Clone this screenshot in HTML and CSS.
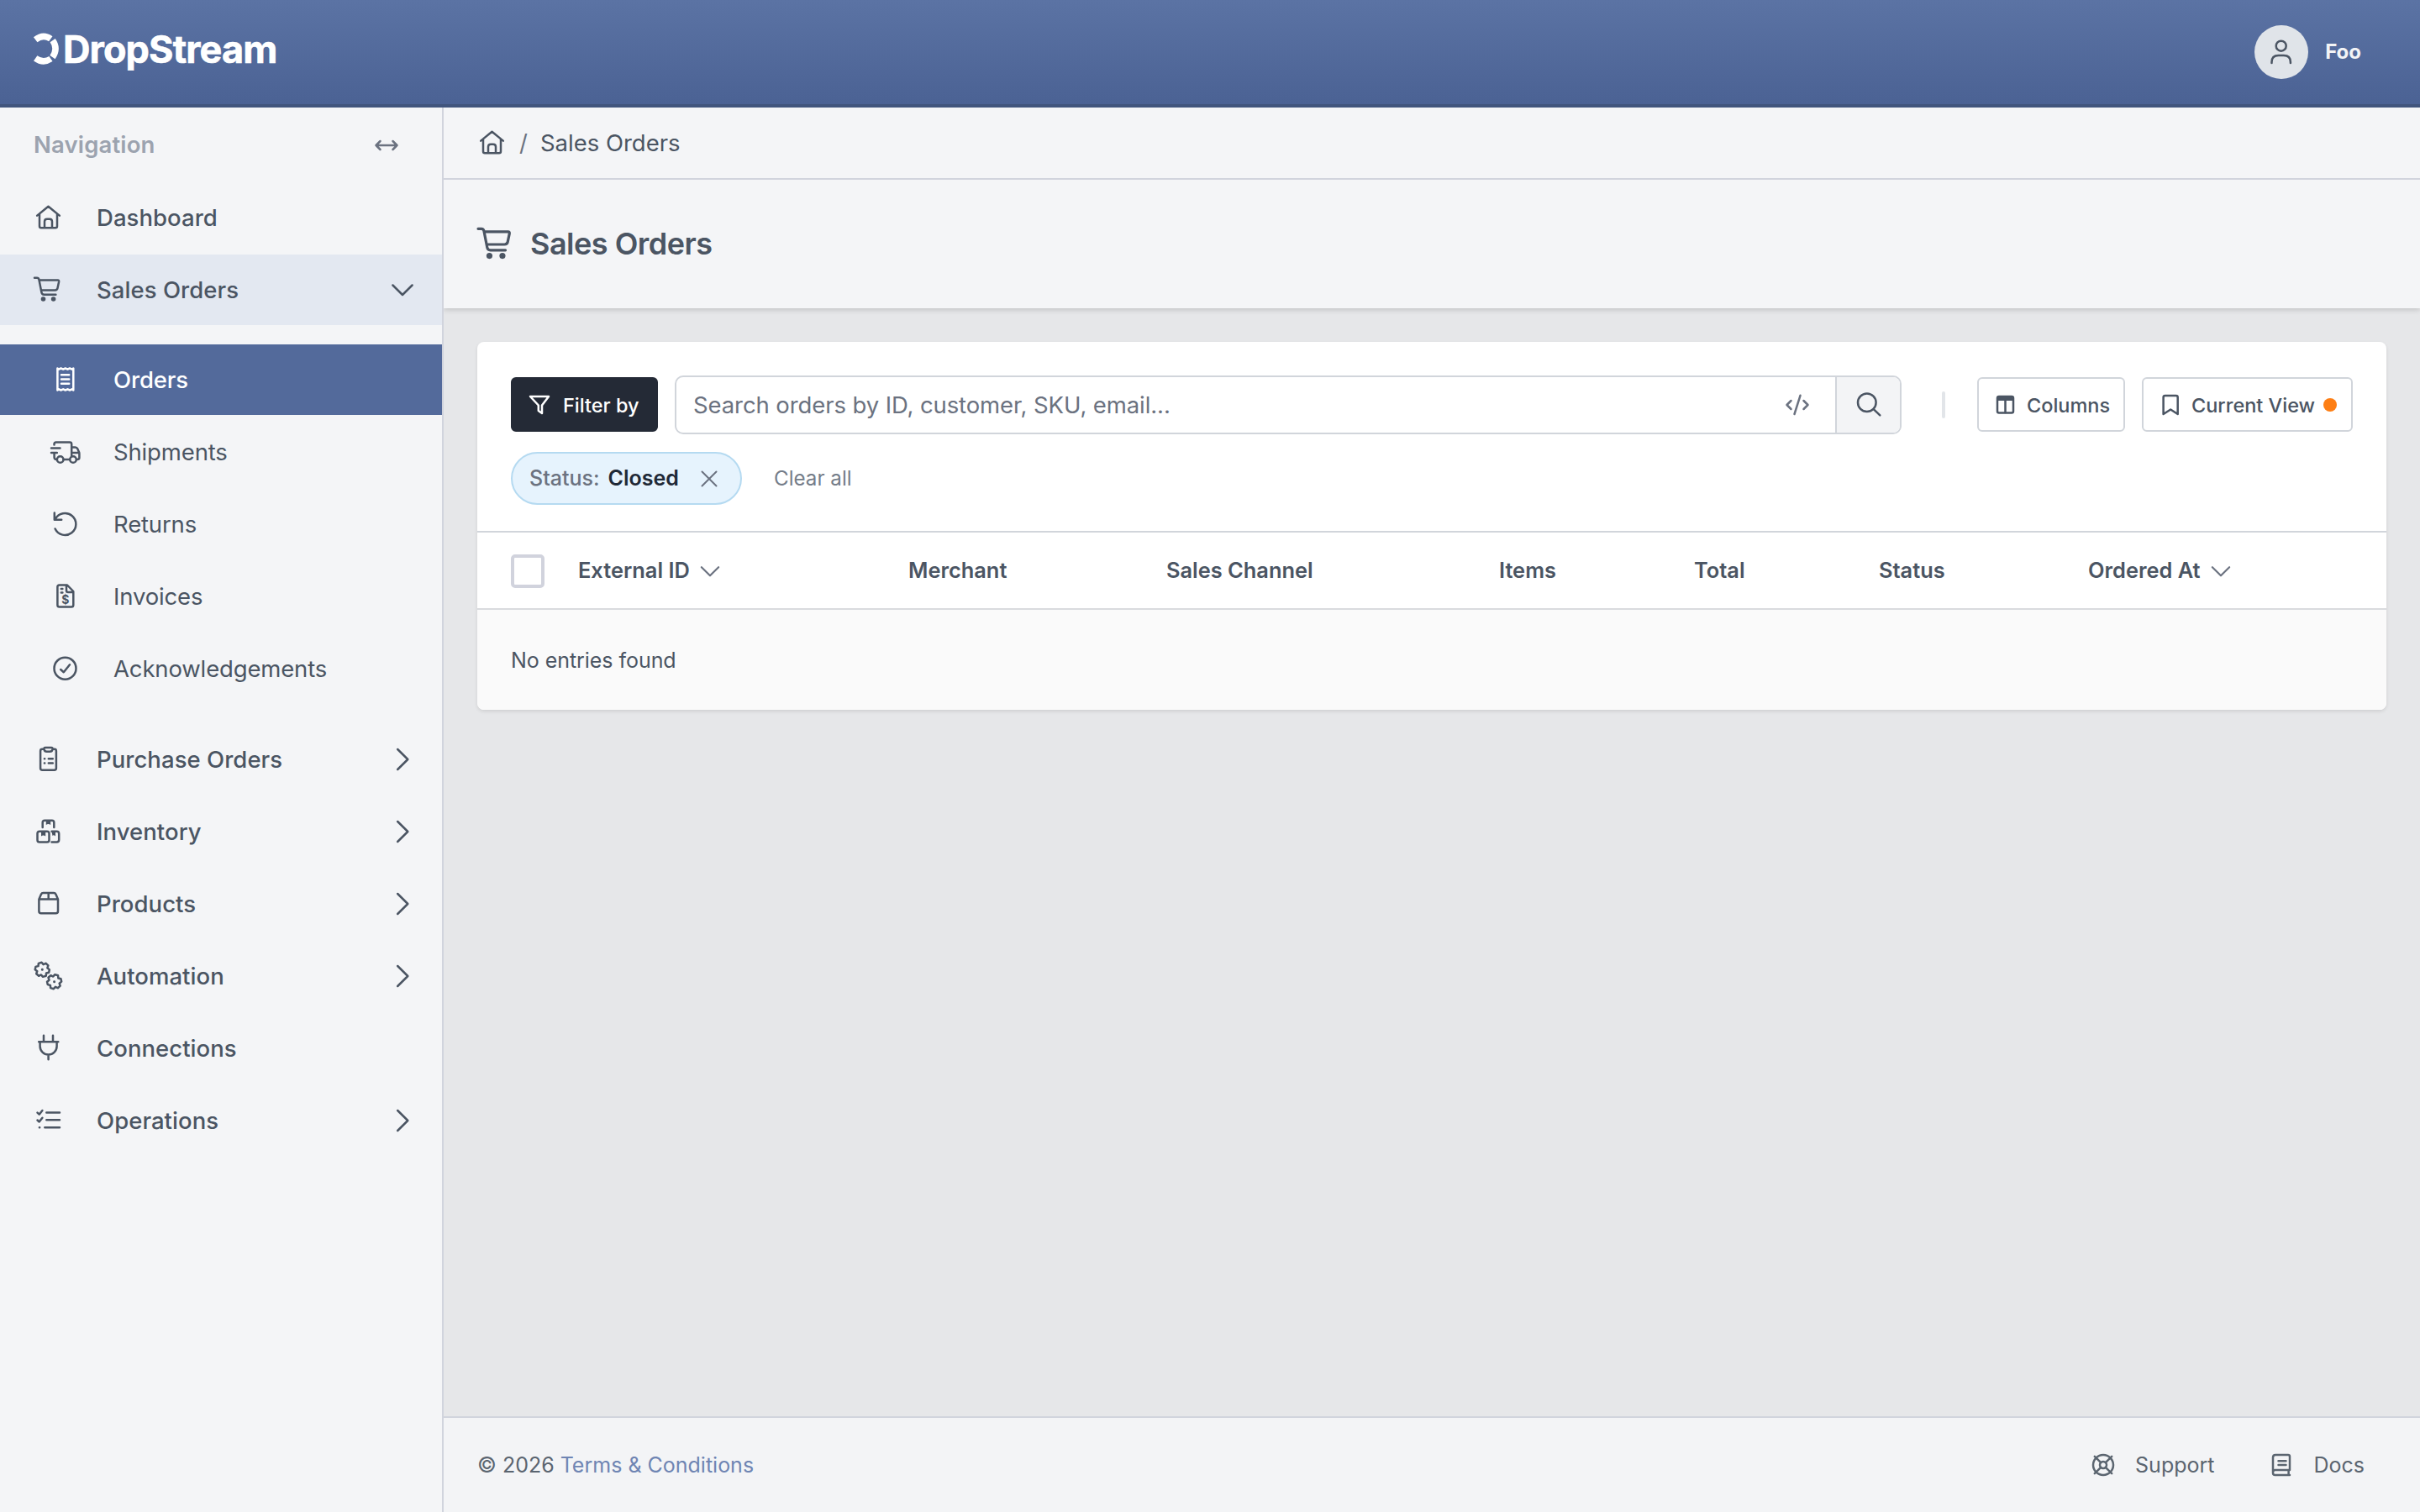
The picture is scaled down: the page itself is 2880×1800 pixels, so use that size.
FILE: index.html
```html
<!DOCTYPE html>
<html lang="en">
<head>
<meta charset="utf-8">
<title>Sales Orders - DropStream</title>
<link rel="stylesheet" href="styles.css">
</head>
<body>
<svg class="sprite" aria-hidden="true">
  <symbol id="home" viewBox="0 0 32 32"><path d="M3.2 13.6 16.5 2.8 29.8 13.6M6 11.6V26.2q0 2 2 2H25q2 0 2-2V11.6M12 28V20.8q0-3 3-3h3q3 0 3 3V28"/></symbol>
  <symbol id="cart" viewBox="0 0 32 32"><path d="M0 1.8h3q2 0 2.4 2l3 15.3q.5 2.6 3 2.6H25.400M5.800 4.6h22q1.600 0 1.300 1.800l-1.600 7.600q-.5 2.400-3 2.400H8.200"/><circle class="fill" cx="10.500" cy="27" r="2.800"/><circle class="fill" cx="22.600" cy="27" r="2.800"/></symbol>
  <symbol id="receipt" viewBox="0 0 32 32"><path d="M7.400 2.500 9 3.700l2.500-1.200L14.200 3.700l2.600-1.200 2.700 1.200 2.500-1.200 2.700 1.200 1.600-1.200V28.500l-1.600-1.200-2.700 1.200-2.500-1.200-2.700 1.200-2.600-1.200-2.700 1.200L9 27.300 7.400 28.500ZM12 10.200h9.200M12 15.500h9.200M12 20.700h9.200"/></symbol>
  <symbol id="truck" viewBox="0 0 32 32"><path d="M3.500 7.500V6.700q0-2.200 2.200-2.200H22q2.200 0 2.200 2.200V21M0 11.500H10.500M0 17H6.800M3.600 17v5.500q0 2.300 3 2.500M14.600 25h7.400M24.200 10.500h4.300q2 0 2.800 1.800l1.600 3.600q.5 1 .5 2V23q0 2-3 2M24.500 17H33"/><circle cx="10.700" cy="25" r="3.800"/><circle cx="26" cy="25" r="3.800"/></symbol>
  <symbol id="undo" viewBox="0 0 32 32"><path d="M4.600 21.500A13 13 0 1 0 4.800 10M3.800 2.600V10.700H12.200"/></symbol>
  <symbol id="invoice" viewBox="0 0 32 32"><path d="M19 2.500H9.700q-2.300 0-2.300 2.300V26.200q0 2.300 2.300 2.300H24q2.300 0 2.300-2.300V10ZM18 3v6q0 2 2 2h6M11.800 7h1.600M11.800 11.500h1.600"/><text x="16.800" y="24.600">$</text></symbol>
  <symbol id="check-circle" viewBox="0 0 32 32"><circle cx="16.500" cy="15.700" r="13"/><path d="M11.200 17 14.800 20.200 22 11.300"/></symbol>
  <symbol id="clipboard" viewBox="0 0 32 32"><path d="M11.500 3.700H9.300q-2.200 0-2.200 2.200V26.500q0 2.200 2.200 2.200h14.400q2.200 0 2.200-2.200V5.900q0-2.200-2.200-2.200H21.500M13 2h7q2 0 1.500 2.200-.5 2.500-3 2.500h-4q-2.500 0-3-2.500Q11 2 13 2M16.800 15.200h5M16.800 20.500h5M11.900 15.200h.3M11.900 20.500h.3"/></symbol>
  <symbol id="boxes" viewBox="0 0 32 32"><path d="M9.700 11V5.200q0-2.400 2.400-2.400h8.800q2.400 0 2.400 2.400V11M20.500 28.500h6q2.700 0 2.700-2.700V18.400q0-2.700-2.700-2.700h-6"/><rect x="3.500" y="15.700" width="14" height="12.800" rx="2.600"/><path class="fill" d="M13.800 3h5.400v5q-2.700-2-5.400 0ZM8 16h5.200v5.500q-2.600-2-5.200 0ZM20.500 16H25v5.500q-2.200-2-3.500-.5Z"/></symbol>
  <symbol id="package" viewBox="0 0 32 32"><path d="M5.400 10.500 8 4.600Q8.700 3 10.400 3H23q1.700 0 2.400 1.600L28 10.500V24.700q0 2.500-2.500 2.500H7.900q-2.500 0-2.500-2.500ZH28M16.700 3v7.500"/></symbol>
  <symbol id="gear" viewBox="-10 -10 20 20"><path d="M8.400-1.700V1.700L5.500 3.200 5.900 6.300 2.500 8.200 0 6.300-2.500 8.200-5.900 6.300-5.500 3.200-8.400 1.700V-1.700L-5.500-3.200-5.900-6.300-2.500-8.200 0-6.300 2.500-8.200 5.900-6.300 5.500-3.200Z"/><circle class="fill" r="1.500"/></symbol>
  <symbol id="gears" viewBox="0 0 32 32"><use href="#gear" x="-10" y="-10" width="20" height="20" transform="translate(9.300 8.300) rotate(12)"/><use href="#gear" x="-10" y="-10" width="20" height="20" transform="translate(23.600 22.700) rotate(-12)"/></symbol>
  <symbol id="plug" viewBox="0 0 32 32"><path d="M11 .8V8M22 .8V8M5.200 8.200H28.300M6.600 8.200V13.500a10 10 0 0 0 20 0V8.200M16.600 23.700v5.600"/></symbol>
  <symbol id="tasks" viewBox="0 0 32 32"><path d="M14.300 6.500H30M14.300 15.200H30M12.300 24.200H30M3.500 6.700 5.700 8.700 9.400 4M3.500 15.500l2.200 2 3.700-4.700M5.900 24.200h.3"/></symbol>
  <symbol id="right" viewBox="0 0 32 32"><path d="M10.200 4 22.300 16 10.200 28"/></symbol>
  <symbol id="down" viewBox="0 0 32 32"><path d="M4.400 10.500 16 22 27.600 10.500"/></symbol>
  <symbol id="arrows" viewBox="0 0 32 32"><path d="M3.500 16H28.500M8.500 11l-5 5 5 5M23.500 11l5 5-5 5"/></symbol>
</svg>

<header class="topbar">
  <div class="brand">
    <svg class="brand-mark" viewBox="0 0 30 36"><path d="M2.200 7.200Q11.500 0 20.300 6.300M22.700 8.200Q29.500 18 22.500 28.200M20.500 30Q11.500 36 2.200 29.400"/></svg>
    <span class="brand-name">DropStream</span>
  </div>
  <div class="user">
    <span class="avatar"><svg class="ic" viewBox="0 0 32 32"><circle cx="15.700" cy="8.700" r="6"/><path d="M4.500 29v-1q0-8 8-8h6.400q8 0 8 8v1"/></svg></span>
    <span class="user-name">Foo</span>
  </div>
</header>

<div class="shell">
  <nav class="sidebar">
    <div class="nav-head"><span>Navigation</span><svg class="ic"><use href="#arrows"/></svg></div>
    <a class="nav-item"><svg class="ic"><use href="#home"/></svg><span>Dashboard</span></a>
    <a class="nav-item open"><svg class="ic"><use href="#cart"/></svg><span>Sales Orders</span><svg class="ic chev"><use href="#down"/></svg></a>
    <div class="subnav">
      <a class="nav-item active"><svg class="ic"><use href="#receipt"/></svg><span>Orders</span></a>
      <a class="nav-item"><svg class="ic"><use href="#truck"/></svg><span>Shipments</span></a>
      <a class="nav-item"><svg class="ic"><use href="#undo"/></svg><span>Returns</span></a>
      <a class="nav-item"><svg class="ic"><use href="#invoice"/></svg><span>Invoices</span></a>
      <a class="nav-item"><svg class="ic"><use href="#check-circle"/></svg><span>Acknowledgements</span></a>
    </div>
    <a class="nav-item"><svg class="ic"><use href="#clipboard"/></svg><span>Purchase Orders</span><svg class="ic chev"><use href="#right"/></svg></a>
    <a class="nav-item"><svg class="ic"><use href="#boxes"/></svg><span>Inventory</span><svg class="ic chev"><use href="#right"/></svg></a>
    <a class="nav-item"><svg class="ic"><use href="#package"/></svg><span>Products</span><svg class="ic chev"><use href="#right"/></svg></a>
    <a class="nav-item"><svg class="ic"><use href="#gears"/></svg><span>Automation</span><svg class="ic chev"><use href="#right"/></svg></a>
    <a class="nav-item"><svg class="ic"><use href="#plug"/></svg><span>Connections</span></a>
    <a class="nav-item"><svg class="ic"><use href="#tasks"/></svg><span>Operations</span><svg class="ic chev"><use href="#right"/></svg></a>
  </nav>

  <div class="content">
    <div class="breadcrumb"><svg class="ic"><use href="#home"/></svg><span class="slash">/</span><span>Sales Orders</span></div>
    <div class="page-head"><svg class="ic"><use href="#cart"/></svg><h1>Sales Orders</h1></div>
    <main class="main">
      <section class="card">
        <div class="toolbar">
          <div class="controls">
            <button class="btn dark"><svg class="ic" viewBox="0 0 28 28"><path d="M3 4H25L17 14.500V24L12.800 21V14.500Z"/></svg><span>Filter by</span></button>
            <div class="search">
              <span class="placeholder">Search orders by ID, customer, SKU, email...</span>
              <svg class="ic code" viewBox="0 0 32 32"><path d="M19.500 4.800 12.500 27M8.500 11l-5 5 5 5M23.500 11l5 5-5 5"/></svg>
              <span class="search-go"><svg class="ic" viewBox="0 0 32 32"><circle cx="13.800" cy="13.300" r="10.800"/><path d="M21.700 21.200 29.300 28.300"/></svg></span>
            </div>
            <span class="divider"></span>
            <button class="btn columns"><svg class="ic" viewBox="0 0 28 28"><rect x="4" y="4" width="19" height="19.500" rx="2"/><path class="fill" d="M4 4h19v5H4z"/><path d="M13.500 9v14"/></svg><span>Columns</span></button>
            <button class="btn view"><svg class="ic" viewBox="0 0 28 28"><path d="M5.600 25V5q0-2 2-2H20.700q2 0 2 2V25L14.200 19.500Z"/></svg><span>Current View</span><i class="dot"></i></button>
          </div>
          <div class="filters">
            <span class="chip"><span class="chip-key">Status:</span><b>Closed</b><svg class="ic" viewBox="0 0 20 20"><path d="M1.500 1.500 18.500 18.500M18.500 1.500 1.500 18.500"/></svg></span>
            <a class="clear">Clear all</a>
          </div>
        </div>
        <div class="thead">
          <span class="checkbox"></span>
          <span class="th"><span>External ID</span><svg class="ic"><use href="#down"/></svg></span>
          <span class="th">Merchant</span>
          <span class="th">Sales Channel</span>
          <span class="th">Items</span>
          <span class="th">Total</span>
          <span class="th">Status</span>
          <span class="th"><span>Ordered At</span><svg class="ic"><use href="#down"/></svg></span>
        </div>
        <div class="empty"><span>No entries found</span></div>
      </section>
    </main>
    <footer class="footer">
      <p><span>© 2026</span> <a>Terms &amp; Conditions</a></p>
      <div class="links">
        <a><svg class="ic" viewBox="0 0 28 28"><circle cx="14" cy="14" r="12"/><circle cx="14" cy="14" r="4"/><path d="M3.800 3.800 11.200 11.200M24.200 3.800 16.800 11.200M3.800 24.200 11.200 16.800M24.200 24.200 16.800 16.800"/></svg><span>Support</span></a>
        <a><svg class="ic" viewBox="0 0 28 28"><path d="M24 26H6.500Q4 26 4 23.500V5Q4 2 7 2H22Q24 2 24 4V20H6.500Q4 20 4 22.800M22.600 20v6M10.500 9.300h9M10.500 14h9"/></svg><span>Docs</span></a>
      </div>
    </footer>
  </div>
</div>
</body>
</html>
```
FILE: styles.css
```css
* { box-sizing: border-box; }
body {
  margin: 0;
  height: 1800px;
  display: flex;
  flex-direction: column;
  font-family: Inter, "Liberation Sans", sans-serif;
  font-size: 27.5px;
  line-height: 1.4;
  color: #4b5563;
  background: #e6e7e9;
}
.sprite { display: none; }
.ic {
  width: 32px;
  height: 32px;
  flex: none;
  overflow: visible;
  fill: none;
  stroke: currentColor;
  stroke-width: 2.5;
  stroke-linecap: round;
  stroke-linejoin: round;
}
symbol { overflow: visible; }
.fill { fill: currentColor; stroke: none; }
symbol text {
  fill: currentColor;
  stroke: none;
  font-size: 14px;
  font-weight: 700;
  text-anchor: middle;
}

.topbar {
  height: 128px;
  flex: none;
  display: flex;
  justify-content: space-between;
  padding: 0 70px 0 40px;
  background: linear-gradient(#5b73a4, #4b6294);
  border-bottom: 4px solid #41557d;
  color: #fff;
}
.brand { display: flex; align-items: center; gap: 5px; height: 116px; }
.brand-mark {
  width: 30px;
  height: 36px;
  overflow: visible;
  fill: none;
  stroke: #fff;
  stroke-width: 7.5;
}
.brand-name {
  font-size: 45px;
  font-weight: 700;
  letter-spacing: -.9px;
  -webkit-text-stroke: .6px #fff;
}
.user { display: flex; align-items: center; gap: 20px; }
.avatar {
  width: 64px;
  height: 64px;
  border-radius: 50%;
  background: #e0e4e9;
  color: #4b5563;
  display: grid;
  place-items: center;
}
.user-name { font-size: 24px; font-weight: 700; color: #f3f4f6; }

.shell { flex: 1; display: flex; min-height: 0; }
.sidebar {
  width: 528px;
  flex: none;
  display: flex;
  flex-direction: column;
  gap: 2px;
  background: #f4f5f7;
  border-right: 2px solid #d1d4dd;
}
.nav-head {
  height: 87px;
  display: flex;
  align-items: center;
  justify-content: space-between;
  padding: 2px 50px 0 40px;
  font-weight: 600;
  letter-spacing: .15px;
  color: #9ca3af;
}
.nav-head .ic { color: #6b7280; }
.nav-item {
  height: 84px;
  display: flex;
  align-items: center;
  padding: 0 31px 0 41px;
  font-weight: 500;
  letter-spacing: .05px;
}
.nav-item span { margin-left: 42px; }
.chev { margin-left: auto; }
.open { background: #e3e8f1; }
.subnav { display: flex; flex-direction: column; gap: 2px; padding: 21px 0 22px; }
.subnav .nav-item { padding-left: 61px; font-weight: 400; letter-spacing: -.15px; }
.subnav .active { background: #536a9b; color: #fff; font-weight: 500; }

.content { flex: 1; display: flex; flex-direction: column; min-width: 0; }
.breadcrumb {
  height: 86px;
  flex: none;
  display: flex;
  align-items: center;
  padding-left: 41px;
  background: #f4f5f7;
  border-bottom: 2px solid #d1d4dd;
}
.slash { margin: 0 15px 0 17px; color: #6b7280; }
.page-head {
  height: 153px;
  flex: none;
  display: flex;
  align-items: center;
  padding-left: 41px;
  background: #f4f5f7;
  box-shadow: 0 2px 6px rgba(0, 0, 0, .16);
  clip-path: inset(0 0 -12px 0);
}
.page-head .ic { width: 41px; height: 41px; }
.page-head h1 { margin: 0 0 0 21px; font-size: 36px; font-weight: 600; letter-spacing: -.5px; }
.main { flex: 1; padding: 40px; }
.card {
  background: #fff;
  border-radius: 8px;
  box-shadow: 0 2px 4px rgba(0, 0, 0, .1);
}
.toolbar { height: 227px; padding: 40px 40px 0; border-bottom: 2px solid #d1d5db; }
.controls { display: flex; align-items: center; }
.btn {
  height: 65px;
  flex: none;
  display: flex;
  align-items: center;
  margin: 0 0 1px 20px;
  padding: 1px 0 0 18px;
  border: 2px solid #d1d5db;
  border-radius: 6px;
  background: #fff;
  color: #4b5563;
  font: 500 23.5px Inter, "Liberation Sans", sans-serif;
  white-space: nowrap;
}
.btn .ic { width: 28px; height: 28px; margin-right: 11px; }
.btn.dark { width: 175px; margin-left: 0; background: #242a36; border-color: #242a36; color: #fff; }
.btn.dark .ic { margin-right: 14px; }
.btn.columns { width: 176px; }
.btn.view { width: 251px; }
.search {
  flex: 1;
  height: 70px;
  margin-left: 20px;
  display: flex;
  align-items: center;
  border: 2px solid #d1d5db;
  border-radius: 10px;
  overflow: hidden;
}
.placeholder { margin-left: 20px; color: #6b7280; letter-spacing: -.1px; }
.code { margin-left: auto; margin-right: 29px; color: #6b7280; }
.search-go {
  width: 77px;
  height: 100%;
  display: grid;
  place-items: center;
  background: #f3f4f6;
  border-left: 2px solid #d1d5db;
}
.divider { width: 4px; height: 32px; margin: 0 18px 0 48px; border-radius: 2px; background: #e2e5e9; }
.dot { width: 16px; height: 16px; margin-left: 10px; border-radius: 50%; background: #fd7e14; }
.filters { display: flex; align-items: center; margin-top: 21px; font-size: 25px; }
.chip {
  width: 275px;
  height: 63px;
  display: flex;
  align-items: center;
  padding-left: 20px;
  border: 2px solid #b5daf1;
  border-radius: 32px;
  background: #e6f3fd;
}
.chip-key { font-weight: 500; color: #6b7280; }
.chip b { margin-left: 10px; font-weight: 600; color: #1f2937; }
.chip .ic { width: 20px; height: 20px; margin-left: 26px; color: #6b7280; stroke-width: 2; }
.clear { margin-left: 38px; color: #757d89; font-size: 24.2px; }
.thead {
  height: 92px;
  display: grid;
  grid-template-columns: 80px 393px 307px 396px 232px 220px 249px 1fr;
  align-items: center;
  padding: 0 0 0 40px;
  border-bottom: 2px solid #d9dbde;
  font-size: 25.4px;
  font-weight: 600;
}
.checkbox { width: 40px; height: 40px; margin-top: 2px; border: 4px solid #d1d3dd; border-radius: 5px; }
.th { display: flex; align-items: center; }
.th .ic { width: 28px; height: 28px; margin: 2px 0 0 10px; color: #6b7280; }
.empty {
  height: 119px;
  display: flex;
  align-items: center;
  padding: 2px 0 0 40px;
  font-size: 25px;
  letter-spacing: -.05px;
  background: #fafafa;
  border-radius: 0 0 8px 8px;
}
.footer {
  height: 114px;
  flex: none;
  display: flex;
  align-items: center;
  justify-content: space-between;
  padding: 0 66px 0 40px;
  border-top: 2px solid #d1d4dd;
  background: #f3f4f6;
  color: #5b6570;
  font-size: 25px;
}
.footer p { margin: 0; }
.footer p a { color: #6f85b3; }
.links { display: flex; gap: 66px; }
.links a { display: flex; align-items: center; gap: 24px; }
.links .ic { width: 28px; height: 28px; }
```
